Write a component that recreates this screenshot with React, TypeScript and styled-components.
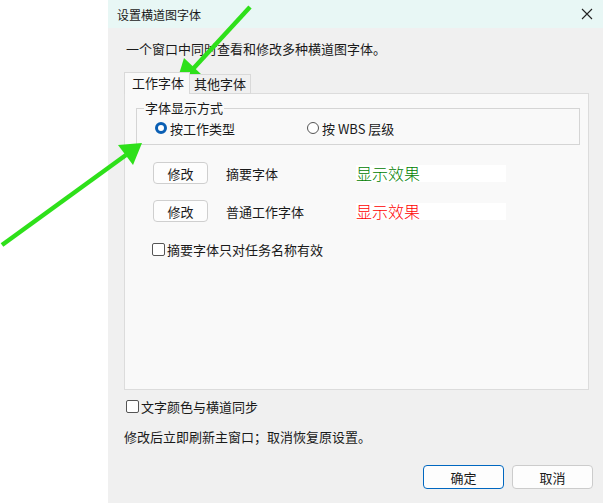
import React from 'react'
import styled, { createGlobalStyle } from 'styled-components'

const GlobalStyle = createGlobalStyle`
  html, body {
    margin: 0;
    padding: 0;
    background: #ffffff;
  }
  body {
    font-family: "Noto Sans CJK SC", "Noto Sans", sans-serif;
    font-size: 13px;
    color: #1a1a1a;
  }
`

const Page = styled.div`
  position: relative;
  display: flex;
  width: 603px;
  height: 503px;
  overflow: hidden;
`

const Blank = styled.div`
  width: 108px;
  background: #ffffff;
`

const Dialog = styled.div`
  flex: 1;
  display: flex;
  flex-direction: column;
  background: #f0f0f0;
`

const TitleBar = styled.div`
  height: 28px;
  display: flex;
  align-items: center;
  justify-content: space-between;
  padding: 0 10px 0 9px;
  background: #e8f7f5;
  font-size: 12px;
`

const Body = styled.div`
  display: flex;
  flex-direction: column;
  padding: 0 10px 0 16px;
`

const Intro = styled.div`
  margin-top: 12px;
  height: 18px;
  line-height: 18px;
  padding-left: 2px;
`

const Tabs = styled.div`
  display: flex;
  align-items: flex-end;
  height: 21px;
  margin-top: 15px;
`

const Tab = styled.div<{ $active?: boolean }>`
  height: ${(p) => (p.$active ? 21 : 18)}px;
  line-height: ${(p) => (p.$active ? 20 : 18)}px;
  padding: 0 ${(p) => (p.$active ? 5 : 4)}px 0 ${(p) => (p.$active ? 7 : 4)}px;
  font-size: 13px;
  background: ${(p) => (p.$active ? '#f9f9f9' : '#f0f0f0')};
  border: 1px solid #d9d9d9;
  border-bottom: ${(p) => (p.$active ? 'none' : '1px solid #d9d9d9')};
  border-left: ${(p) => (p.$active ? '1px solid #d9d9d9' : 'none')};
  position: relative;
  z-index: ${(p) => (p.$active ? 2 : 1)};
`

const Panel = styled.div`
  height: 295px;
  margin-right: 4px;
  margin-top: -1px;
  background: #f9f9f9;
  border: 1px solid #dcdcdc;
  padding: 0 8px 0 11px;
  display: flex;
  flex-direction: column;
`

const Group = styled.fieldset`
  margin: 7px 0 0 0;
  padding: 0 0 3px 0;
  border: 1px solid #d5d5d5;
`

const Legend = styled.legend`
  padding: 0 1px;
  margin-left: 7px;
  font-size: 13px;
  line-height: 14px;
`

const RadioRow = styled.div`
  display: flex;
  align-items: center;
  height: 26px;
  padding-left: 18px;
`

const RadioLabel = styled.label`
  display: flex;
  align-items: center;
  gap: 3px;
  width: 152px;
`

const Radio = styled.span<{ $on?: boolean }>`
  box-sizing: border-box;
  width: 12px;
  height: 12px;
  border-radius: 50%;
  border: ${(p) => (p.$on ? '3px solid #0a5fb4' : '1px solid #555555')};
  background: #ffffff;
`

const FontRow = styled.div<{ $first?: boolean }>`
  display: flex;
  align-items: center;
  margin-top: ${(p) => (p.$first ? 17 : 16)}px;
  margin-left: 17px;
  height: 22px;
`

const SmallButton = styled.button`
  width: 55px;
  height: 22px;
  padding: 0;
  font-family: inherit;
  font-size: 13px;
  color: #1a1a1a;
  background: #fdfdfd;
  border: 1px solid #cfcfcf;
  border-radius: 4px;
`

const FontLabel = styled.span`
  width: 130px;
  margin-left: 18px;
`

const Preview = styled.div<{ $color: string }>`
  width: 150px;
  height: 17px;
  line-height: 17px;
  background: #ffffff;
  color: ${(p) => p.$color};
  font-size: 16px;
  font-weight: 300;
`

const Check = styled.label<{ $indent?: number; $top?: number }>`
  display: flex;
  align-items: center;
  gap: 2px;
  margin-left: ${(p) => p.$indent ?? 0}px;
  margin-top: ${(p) => p.$top ?? 0}px;
  height: 16px;
`

const Box = styled.span`
  box-sizing: border-box;
  width: 13px;
  height: 13px;
  border: 1px solid #555555;
  border-radius: 2px;
  background: #ffffff;
`

const Note = styled.div`
  margin-top: 14px;
  line-height: 18px;
`

const Footer = styled.div`
  display: flex;
  justify-content: flex-end;
  gap: 8px;
  margin-top: 19px;
`

const DialogButton = styled.button<{ $primary?: boolean }>`
  width: 81px;
  height: 24px;
  padding: 0;
  font-family: inherit;
  font-size: 13px;
  color: #1a1a1a;
  background: #fdfdfd;
  border: 1px solid ${(p) => (p.$primary ? '#0067c0' : '#cccccc')};
  border-radius: 4px;
`

const Arrows = styled.svg`
  position: absolute;
  left: 0;
  top: 0;
  pointer-events: none;
`

const App = () => {
  return (
    <>
      <GlobalStyle />
      <Page>
        <Blank />
        <Dialog>
          <TitleBar>
            <span>设置横道图字体</span>
            <svg width="12" height="12" viewBox="0 0 12 12">
              <path d="M1 1 L11 11 M11 1 L1 11" stroke="#222" strokeWidth="1.1" />
            </svg>
          </TitleBar>
          <Body>
            <Intro>一个窗口中同时查看和修改多种横道图字体。</Intro>
            <Tabs>
              <Tab $active>工作字体</Tab>
              <Tab>其他字体</Tab>
            </Tabs>
            <Panel>
              <Group>
                <Legend>字体显示方式</Legend>
                <RadioRow>
                  <RadioLabel>
                    <Radio $on />
                    按工作类型
                  </RadioLabel>
                  <RadioLabel>
                    <Radio />
                    按 WBS 层级
                  </RadioLabel>
                </RadioRow>
              </Group>
              <FontRow $first>
                <SmallButton>修改</SmallButton>
                <FontLabel>摘要字体</FontLabel>
                <Preview $color="#008000">显示效果</Preview>
              </FontRow>
              <FontRow>
                <SmallButton>修改</SmallButton>
                <FontLabel>普通工作字体</FontLabel>
                <Preview $color="#ff0000">显示效果</Preview>
              </FontRow>
              <Check $indent={16} $top={19}>
                <Box />
                摘要字体只对任务名称有效
              </Check>
            </Panel>
            <Check $indent={2} $top={8}>
              <Box />
              文字颜色与横道同步
            </Check>
            <Note>修改后立即刷新主窗口；取消恢复原设置。</Note>
            <Footer>
              <DialogButton $primary>确定</DialogButton>
              <DialogButton>取消</DialogButton>
            </Footer>
          </Body>
        </Dialog>
        <Arrows width="603" height="503" viewBox="0 0 603 503">
          <line x1="250" y1="7" x2="192" y2="70" stroke="#2ee01a" strokeWidth="4.5" />
          <polygon points="176,84 184,58 202,75" fill="#2ee01a" />
          <line x1="2" y1="245" x2="126" y2="155" stroke="#2ee01a" strokeWidth="4.5" />
          <polygon points="142,143 118,145 133,165" fill="#2ee01a" />
        </Arrows>
      </Page>
    </>
  )
}

export default App
